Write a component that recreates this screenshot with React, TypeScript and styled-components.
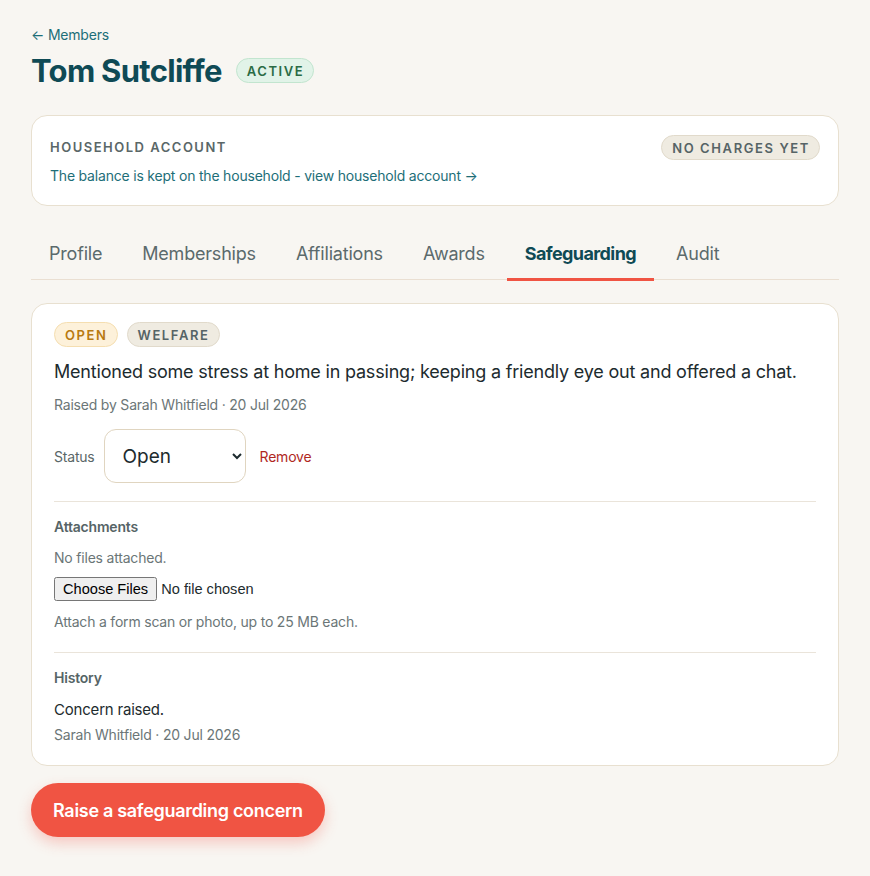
import React from 'react'
import styled, { createGlobalStyle } from 'styled-components'

const GlobalStyle = createGlobalStyle`
  body {
    margin: 0;
    background: #f8f6f2;
    font-family: Inter, 'Liberation Sans', sans-serif;
    letter-spacing: -0.2px;
    color: #1d2b2e;
  }
`

const Page = styled.main`
  padding: 24px 31px 40px;
`

const BackLink = styled.a`
  display: inline-block;
  font-size: 14px;
  color: #1d6e78;
  text-decoration: none;
`

const TitleRow = styled.div`
  display: flex;
  align-items: center;
  gap: 14px;
  margin-top: 8px;
`

const Title = styled.h1`
  margin: 0;
  font-size: 31px;
  font-weight: 700;
  color: #0f4a55;
  letter-spacing: -0.7px;
`

type Tone = 'green' | 'sand' | 'amber'

const toneColors: Record<Tone, { bg: string; border: string; fg: string }> = {
  green: { bg: '#e1f3e8', border: '#c2e5cf', fg: '#2a6b45' },
  sand: { bg: '#efebe1', border: '#e1dacb', fg: '#566466' },
  amber: { bg: '#fdf1da', border: '#f5deb0', fg: '#b87a10' },
}

const Badge = styled.span<{ tone: Tone }>`
  display: inline-flex;
  align-items: center;
  height: 23px;
  padding: 0 9px 0 10px;
  border-radius: 999px;
  font-size: 13px;
  font-weight: 600;
  letter-spacing: 1.6px;
  text-transform: uppercase;
  background: ${({ tone }) => toneColors[tone].bg};
  border: 1px solid ${({ tone }) => toneColors[tone].border};
  color: ${({ tone }) => toneColors[tone].fg};
`

const Card = styled.section`
  background: #fff;
  border: 1px solid #e8e0d0;
  border-radius: 16px;
`

const HouseholdCard = styled(Card)`
  margin-top: 26px;
  padding: 19px 18px 21px;
  display: flex;
  justify-content: space-between;
  align-items: flex-start;
`

const Eyebrow = styled.div`
  font-size: 13px;
  font-weight: 600;
  letter-spacing: 1.5px;
  color: #5a6768;
  margin-top: 4px;
`

const AccountLink = styled.a`
  display: block;
  margin-top: 12px;
  font-size: 14px;
  color: #1d6e78;
  text-decoration: none;
`

const Tabs = styled.nav`
  display: flex;
  margin-top: 25px;
  border-bottom: 1px solid #eadfd2;
`

const Tab = styled.div<{ active?: boolean }>`
  padding: 12px 18px 14px;
  margin-right: 4px;
  font-size: 18px;
  font-weight: ${({ active }) => (active ? 700 : 400)};
  color: ${({ active }) => (active ? '#0f4a55' : '#5b6a6c')};
  letter-spacing: ${({ active }) => (active ? '-0.6px' : '-0.2px')};
  border-bottom: 3px solid ${({ active }) => (active ? '#f05443' : 'transparent')};
  margin-bottom: -2px;
`

const ConcernCard = styled(Card)`
  margin-top: 23px;
  padding: 18px 22px 22px;
`

const BadgeRow = styled.div`
  display: flex;
  gap: 9px;
`

const Description = styled.p`
  margin: 13px 0 0;
  font-size: 18px;
  line-height: 23px;
  color: #1d2b2e;
`

const Meta = styled.div<{ gap?: number }>`
  margin-top: ${({ gap }) => gap ?? 10}px;
  font-size: 14px;
  color: #6b7677;
`

const StatusRow = styled.div`
  display: flex;
  align-items: center;
  margin-top: 16px;
  padding-bottom: 18px;
  border-bottom: 1px solid #eae4da;
`

const Label = styled.span`
  margin-right: 9px;
  font-size: 14px;
  color: #5a6768;
`

const Select = styled.select`
  width: 142px;
  height: 54px;
  margin-right: 14px;
  padding: 0 8px 0 14px;
  border: 1px solid #e0d5c0;
  border-radius: 12px;
  background: #fff;
  font-family: inherit;
  font-size: 19px;
  color: #1d2b2e;
`

const RemoveButton = styled.button`
  border: 0;
  background: none;
  padding: 0;
  font-family: inherit;
  font-size: 14px;
  letter-spacing: -0.2px;
  color: #b0271e;
`

const Section = styled.div<{ last?: boolean }>`
  padding: 16px 0 ${({ last }) => (last ? 0 : 22)}px;
  border-bottom: ${({ last }) => (last ? 'none' : '1px solid #eae4da')};
`

const SectionTitle = styled.div`
  font-size: 14px;
  font-weight: 600;
  color: #566466;
`

const FileInput = styled.input`
  display: block;
  margin-top: 11px;
  font-size: 14.6px;
  letter-spacing: 0;
  font-family: 'Liberation Sans', Arial, sans-serif;

  &::file-selector-button {
    padding: 2px 7px;
    font: inherit;
  }
`

const HistoryText = styled.div`
  margin-top: 14px;
  font-size: 15px;
  color: #1d2b2e;
`

const PrimaryButton = styled.button`
  margin-top: 17px;
  height: 54px;
  padding: 0 22px;
  border: 0;
  border-radius: 27px;
  background: #f05443;
  color: #fff;
  font-family: inherit;
  font-size: 18px;
  font-weight: 600;
  letter-spacing: -0.3px;
  box-shadow: 0 6px 14px rgba(240, 84, 67, 0.28);
`

export default function App() {
  return (
    <>
      <GlobalStyle />
      <Page>
        <BackLink href="#">← Members</BackLink>
        <TitleRow>
          <Title>Tom Sutcliffe</Title>
          <Badge tone="green">Active</Badge>
        </TitleRow>

        <HouseholdCard>
          <div>
            <Eyebrow>HOUSEHOLD ACCOUNT</Eyebrow>
            <AccountLink href="#">The balance is kept on the household - view household account →</AccountLink>
          </div>
          <Badge tone="sand">No charges yet</Badge>
        </HouseholdCard>

        <Tabs>
          {['Profile', 'Memberships', 'Affiliations', 'Awards', 'Safeguarding', 'Audit'].map((t) => (
            <Tab key={t} active={t === 'Safeguarding'}>
              {t}
            </Tab>
          ))}
        </Tabs>

        <ConcernCard>
          <BadgeRow>
            <Badge tone="amber">Open</Badge>
            <Badge tone="sand">Welfare</Badge>
          </BadgeRow>
          <Description>
            Mentioned some stress at home in passing; keeping a friendly eye out and offered a chat.
          </Description>
          <Meta gap={13}>Raised by Sarah Whitfield · 20 Jul 2026</Meta>
          <StatusRow>
            <Label>Status</Label>
            <Select defaultValue="open">
              <option value="open">Open</option>
              <option value="monitoring">Monitoring</option>
              <option value="closed">Closed</option>
            </Select>
            <RemoveButton>Remove</RemoveButton>
          </StatusRow>
          <Section>
            <SectionTitle>Attachments</SectionTitle>
            <Meta gap={14}>No files attached.</Meta>
            <FileInput type="file" multiple />
            <Meta gap={12}>Attach a form scan or photo, up to 25 MB each.</Meta>
          </Section>
          <Section last>
            <SectionTitle>History</SectionTitle>
            <HistoryText>Concern raised.</HistoryText>
            <Meta gap={7}>Sarah Whitfield · 20 Jul 2026</Meta>
          </Section>
        </ConcernCard>

        <PrimaryButton>Raise a safeguarding concern</PrimaryButton>
      </Page>
    </>
  )
}
